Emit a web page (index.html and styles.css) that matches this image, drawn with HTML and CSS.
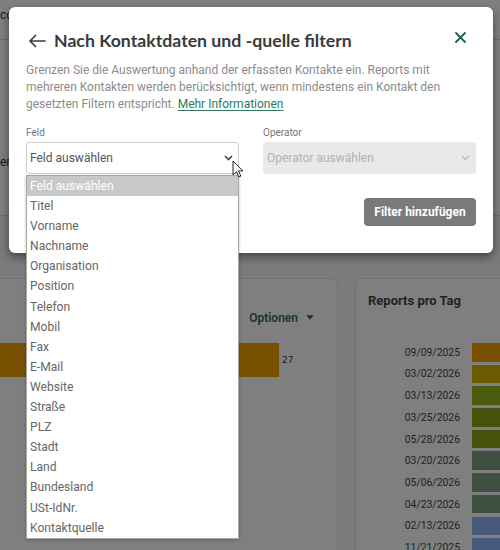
FILE: index.html
```html
<!DOCTYPE html>
<html lang="de">
<head>
<meta charset="utf-8">
<title>Filter</title>
<link rel="stylesheet" href="styles.css">
</head>
<body>
<div class="page">
  <header class="topbar"><span class="crumb">cc</span></header>
  <section class="filterbar"><span class="filter-text">er</span></section>
  <main class="cards">
    <div class="card card-left">
      <div class="card-head">
        <span class="options">Optionen
          <svg class="caret" width="8" height="5" viewBox="0 0 8 5"><path d="M0.3 0.3h7.4L4 4.7z" fill="currentColor"/></svg>
        </span>
      </div>
      <div class="hbar-row"><div class="hbar c1" style="width:291px"></div><span class="hbar-val">27</span></div>
    </div>
    <div class="card card-right">
      <div class="card-title">Reports pro Tag</div>
      <div class="chart">
        <span class="date">09/09/2025</span><span class="bar c1"></span>
        <span class="date">03/02/2026</span><span class="bar c2"></span>
        <span class="date">03/13/2026</span><span class="bar c3"></span>
        <span class="date">03/25/2026</span><span class="bar c4"></span>
        <span class="date">05/28/2026</span><span class="bar c4"></span>
        <span class="date">03/20/2026</span><span class="bar c5"></span>
        <span class="date">05/06/2026</span><span class="bar c5"></span>
        <span class="date">04/23/2026</span><span class="bar c5"></span>
        <span class="date">02/13/2026</span><span class="bar c6"></span>
        <span class="date">11/21/2025</span><span class="bar c6"></span>
      </div>
    </div>
  </main>
</div>

<div class="overlay"></div>

<div class="modal">
  <div class="modal-head">
    <svg class="back" width="18" height="14" viewBox="0 0 18 14"><path d="M17 7H2M7.5 1.5L2 7l5.5 5.5" fill="none" stroke="#3a3a3a" stroke-width="1.7" stroke-linecap="round" stroke-linejoin="round"/></svg>
    <h1 class="title">Nach Kontaktdaten und -quelle filtern</h1>
    <svg class="close" width="11" height="11" viewBox="0 0 11 11"><path d="M1 1l9 9M10 1l-9 9" stroke="#215f4c" stroke-width="1.8" stroke-linecap="round"/></svg>
  </div>
  <p class="desc">Grenzen Sie die Auswertung anhand der erfassten Kontakte ein. Reports mit mehreren Kontakten werden berücksichtigt, wenn mindestens ein Kontakt den gesetzten Filtern entspricht. <a class="more" href="#">Mehr Informationen</a></p>
  <div class="fields">
    <div class="field">
      <label class="label">Feld</label>
      <div class="select">
        <span>Feld auswählen</span>
        <svg class="chev" width="9" height="6" viewBox="0 0 9 6"><path d="M1 1l3.5 3.5L8 1" fill="none" stroke="#444" stroke-width="1.6"/></svg>
      </div>
    </div>
    <div class="field">
      <label class="label">Operator</label>
      <div class="select disabled">
        <span>Operator auswählen</span>
        <svg class="chev" width="9" height="6" viewBox="0 0 9 6"><path d="M1 1l3.5 3.5L8 1" fill="none" stroke="#bbb" stroke-width="1.4"/></svg>
      </div>
    </div>
  </div>
  <div class="actions"><button class="btn" type="button">Filter hinzufügen</button></div>
</div>

<ul class="dropdown">
  <li class="sel">Feld auswählen</li>
  <li>Titel</li>
  <li>Vorname</li>
  <li>Nachname</li>
  <li>Organisation</li>
  <li>Position</li>
  <li>Telefon</li>
  <li>Mobil</li>
  <li>Fax</li>
  <li>E-Mail</li>
  <li>Website</li>
  <li>Straße</li>
  <li>PLZ</li>
  <li>Stadt</li>
  <li>Land</li>
  <li>Bundesland</li>
  <li>USt-IdNr.</li>
  <li>Kontaktquelle</li>
</ul>

<svg class="cursor" width="12" height="18" viewBox="0 0 12 18"><path d="M1 1v14l3.5-3.3 2.3 5.3 2-0.9-2.3-5.2H11z" fill="#fff" stroke="#222" stroke-width="1" stroke-linejoin="round"/></svg>
</body>
</html>
```

FILE: styles.css
```css
* { box-sizing: border-box; }
html, body { margin: 0; padding: 0; }
body {
  width: 500px;
  height: 550px;
  overflow: hidden;
  background: #f6f6f6;
  font-family: Roboto, "Liberation Sans", sans-serif;
  position: relative;
}

/* underlying page */
.topbar {
  height: 40px;
  background: #fff;
  border-bottom: 1px solid #d8d8d8;
  font-size: 12px;
  color: #333;
  padding-top: 8px;
}
.filterbar {
  height: 176px;
  background: #fff;
  border-bottom: 1px solid #d8d8d8;
  font-size: 12px;
  color: #333;
  padding-top: 115px;
}
.cards {
  display: flex;
  gap: 17px;
  padding-top: 62px;
}
.card {
  background: #fff;
  border: 1px solid #e2e2e2;
  border-radius: 6px;
  height: 300px;
  flex: none;
}
.card-left {
  width: 351px;
  margin-left: -13px;
}
.card-head {
  display: flex;
  justify-content: flex-end;
  padding: 13px 23px 0 0;
  height: 64px;
}
.options {
  display: flex;
  align-items: center;
  gap: 8px;
  font-size: 12px;
  font-weight: 600;
  line-height: 18px;
  color: #356a5d;
}
.hbar-row {
  display: flex;
  align-items: center;
  gap: 3px;
}
.hbar { height: 34px; }
.hbar-val { font-size: 9px; color: #444; font-family: "DejaVu Sans", sans-serif; }

.card-right {
  width: 170px;
  padding: 13px 0 0 12px;
}
.card-title {
  font-size: 13px;
  font-weight: 700;
  line-height: 18px;
  color: #444;
}
.chart {
  margin-top: 33px;
  display: grid;
  grid-template-columns: 92px 1fr;
  column-gap: 12px;
  row-gap: 3.1px;
  grid-auto-rows: 18.6px;
  align-items: center;
}
.date {
  text-align: right;
  font-size: 10.4px;
  color: #444;
}
.bar { height: 18.6px; }
.c1 { background: #f0a000; }
.c2 { background: #d4b400; }
.c3 { background: #94b41e; }
.c4 { background: #88a414; }
.c5 { background: #7ca080; }
.c6 { background: #90b4f8; }

.overlay {
  position: absolute;
  inset: 0;
  background: rgba(0, 0, 0, 0.5);
}

/* modal */
.modal {
  position: absolute;
  left: 9px;
  top: 7px;
  width: 484px;
  height: 246px;
  background: #fff;
  border-radius: 6px;
  box-shadow: 0 4px 10px rgba(0, 0, 0, 0.45);
  padding: 22px 17px 0;
}
.modal-head {
  display: flex;
  align-items: center;
  height: 24px;
}
.back { margin: 0 8px 0 2px; flex: none; }
.title {
  margin: 0;
  flex: 1;
  font-family: Lato, "Open Sans", sans-serif;
  font-size: 17.7px;
  font-weight: 700;
  color: #3a3a3a;
  line-height: 24px;
}
.close { flex: none; margin: -8px 10px 0 0; }
.desc {
  margin: 9px 0 0;
  font-size: 12px;
  line-height: 17px;
  color: #8c8c8c;
}
.more {
  color: #2b7a5f;
  text-decoration: underline;
  text-underline-offset: 2px;
}
.fields {
  margin-top: 13px;
  display: grid;
  grid-template-columns: 213px 213px;
  column-gap: 24px;
}
.label {
  display: block;
  font-size: 10px;
  line-height: 14px;
  color: #777;
  margin-bottom: 2px;
}
.select {
  height: 32px;
  border: 1px solid #cfcfcf;
  border-radius: 3px;
  display: flex;
  align-items: center;
  justify-content: space-between;
  padding: 0 5px 0 3px;
  font-size: 12px;
  color: #555;
}
.select.disabled {
  background: #e9e9e9;
  border-color: #e9e9e9;
  color: #b2b2b2;
}
.actions {
  display: flex;
  justify-content: flex-end;
  margin-top: 24px;
}
.btn {
  width: 112px;
  height: 28px;
  border: none;
  border-radius: 4px;
  background: #7a7a7a;
  color: #fff;
  font-family: Roboto, "Liberation Sans", sans-serif;
  font-size: 12px;
  font-weight: 700;
  padding: 0;
}

/* native select popup */
.dropdown {
  position: absolute;
  left: 26px;
  top: 175px;
  width: 213px;
  margin: 0;
  padding: 0;
  list-style: none;
  background: #fff;
  border: 1px solid #a8a8a8;
  box-shadow: 0 1px 3px rgba(0, 0, 0, 0.25);
}
.dropdown li {
  height: 20.1px;
  line-height: 20px;
  padding-left: 3px;
  font-size: 12.1px;
  color: #666;
}
.dropdown li.sel {
  background: #c8c8c8;
  color: #fff;
}
.cursor {
  position: absolute;
  left: 232px;
  top: 160px;
}
```
